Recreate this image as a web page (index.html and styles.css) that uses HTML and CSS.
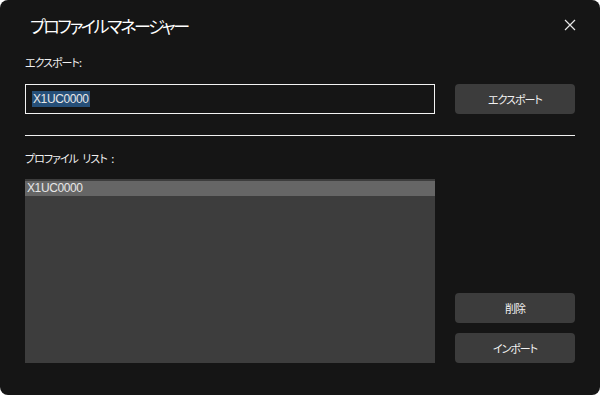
FILE: index.html
```html
<!DOCTYPE html>
<html lang="ja">
<head>
<meta charset="utf-8">
<link rel="stylesheet" href="styles.css">
</head>
<body>
<div class="window">
  <div class="titlebar">
    <div class="title">プロファイルマネージャー</div>
    <div class="close">
      <svg width="12" height="12" viewBox="0 0 12 12"><path d="M1 1 L11 11 M11 1 L1 11" stroke="#e6e6e6" stroke-width="1.2" fill="none"/></svg>
    </div>
  </div>
  <div class="label">エクスポート:</div>
  <div class="row">
    <div class="input"><span class="sel">X1UC0000</span></div>
    <div class="btn">エクスポート</div>
  </div>
  <div class="divider"></div>
  <div class="label label2">プロファイル リスト :</div>
  <div class="row bottom">
    <div class="list">
      <div class="item selected">X1UC0000</div>
    </div>
    <div class="actions">
      <div class="btn">削除</div>
      <div class="btn">インポート</div>
    </div>
  </div>
</div>
</body>
</html>
```
FILE: styles.css
```css
html, body {
  margin: 0;
  padding: 0;
  background: #ffffff;
}
body {
  width: 600px;
  height: 395px;
  overflow: hidden;
  font-family: "Noto Sans CJK JP", "Noto Sans", sans-serif;
  font-feature-settings: "palt";
  color: #ffffff;
}
.window {
  width: 600px;
  height: 395px;
  box-sizing: border-box;
  background: #151515;
  border-radius: 8px;
  padding: 0 25px;
  display: flex;
  flex-direction: column;
}
.titlebar {
  height: 50px;
  display: flex;
  align-items: center;
  justify-content: space-between;
}
.title {
  font-size: 17px;
  padding-left: 5px;
  color: #ffffff;
  letter-spacing: -2.3px;
}
.close {
  width: 12px;
  height: 12px;
  margin-right: -1px;
  margin-top: -1px;
  display: flex;
}
.label {
  height: 24px;
  line-height: 24px;
  font-size: 11px;
  color: #f0f0f0;
  letter-spacing: -1px;
}
.row {
  display: flex;
  gap: 20px;
  margin-top: 10px;
}
.input {
  width: 410px;
  height: 30px;
  box-sizing: border-box;
  border: 1px solid #f2f2f2;
  display: flex;
  align-items: center;
  padding-left: 6px;
}
.sel {
  background: #264f78;
  color: #e8e8e8;
  font-family: "Liberation Sans", sans-serif;
  font-size: 12px;
  letter-spacing: -0.4px;
  line-height: 16px;
  padding: 0 1px;
}
.btn {
  width: 120px;
  height: 30px;
  background: #3c3c3c;
  border-radius: 4px;
  display: flex;
  align-items: center;
  justify-content: center;
  font-size: 11px;
  color: #f2f2f2;
  letter-spacing: -1px;
}
.divider {
  height: 1px;
  background: #f0f0f0;
  margin-top: 21px;
}
.label2 {
  margin-top: 10px;
  word-spacing: 3px;
}
.bottom {
  margin-top: 9px;
}
.list {
  width: 410px;
  height: 184px;
  background: #3d3d3d;
  padding-top: 2px;
  box-sizing: border-box;
}
.item {
  height: 15px;
  line-height: 15px;
  font-family: "Liberation Sans", sans-serif;
  font-size: 12px;
  letter-spacing: -0.4px;
  padding-left: 2px;
  color: #e6e6e6;
}
.item.selected {
  background: #666666;
}
.actions {
  display: flex;
  flex-direction: column;
  justify-content: flex-end;
  gap: 10px;
}
```
